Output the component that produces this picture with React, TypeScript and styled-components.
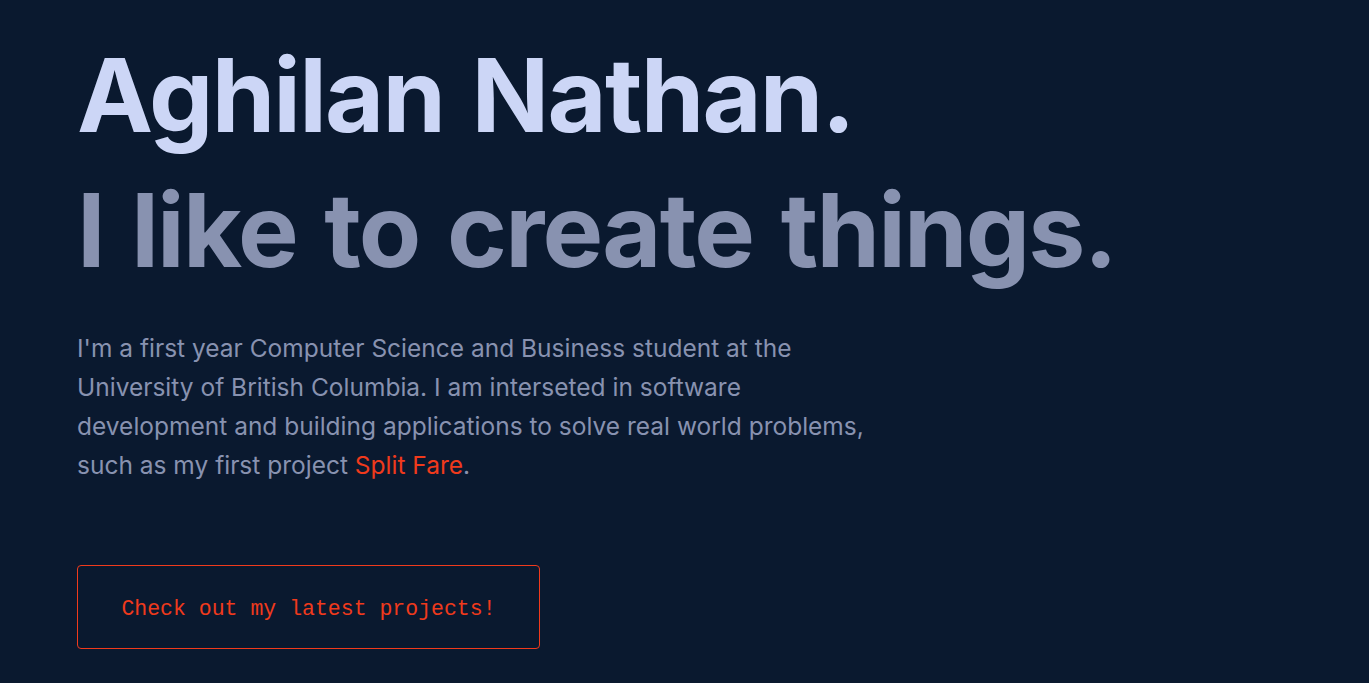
import React from "react";
import styled, { createGlobalStyle } from "styled-components";

const Global = createGlobalStyle`
  html, body { margin: 0; padding: 0; background: #0a192f; }
  body { font-family: Inter, "Noto Sans", sans-serif; }
  * { box-sizing: border-box; }
`;

const Page = styled.main`
  min-height: 683px;
  background: #0a192f;
  padding: 28px 0 0 77px;
  display: flex;
  flex-direction: column;
  align-items: flex-start;
`;

const Title = styled.h1<{ $muted?: boolean }>`
  margin: 0;
  font-family: Inter, "Noto Sans", sans-serif;
  font-weight: 700;
  font-size: 102px;
  line-height: 135px;
  letter-spacing: -1.8px;
  word-spacing: 5px;
  color: ${(p) => (p.$muted ? "#8892b0" : "#ccd6f6")};
  white-space: nowrap;
`;

const Bio = styled.p`
  margin: 31px 0 0;
  max-width: 805px;
  font-family: Inter, "Noto Sans", sans-serif;
  font-size: 24.5px;
  line-height: 39px;
  color: #8892b0;
`;

const Accent = styled.a`
  color: #f03a1c;
  text-decoration: none;
`;

const CTA = styled.a`
  margin-top: 80px;
  width: 463px;
  height: 84px;
  padding-top: 3px;
  display: flex;
  align-items: center;
  justify-content: center;
  border: 1px solid #f03a1c;
  border-radius: 4px;
  color: #f03a1c;
  font-family: "Liberation Mono", monospace;
  font-size: 21.5px;
  text-decoration: none;
`;

export default function App() {
  return (
    <>
      <Global />
      <Page>
        <Title>Aghilan Nathan.</Title>
        <Title $muted>I like to create things.</Title>
        <Bio>
          I'm a first year Computer Science and Business student at the
          University of British Columbia. I am interseted in software
          development and building applications to solve real world problems,
          such as my first project <Accent href="#">Split Fare</Accent>.
        </Bio>
        <CTA href="#">Check out my latest projects!</CTA>
      </Page>
    </>
  );
}
